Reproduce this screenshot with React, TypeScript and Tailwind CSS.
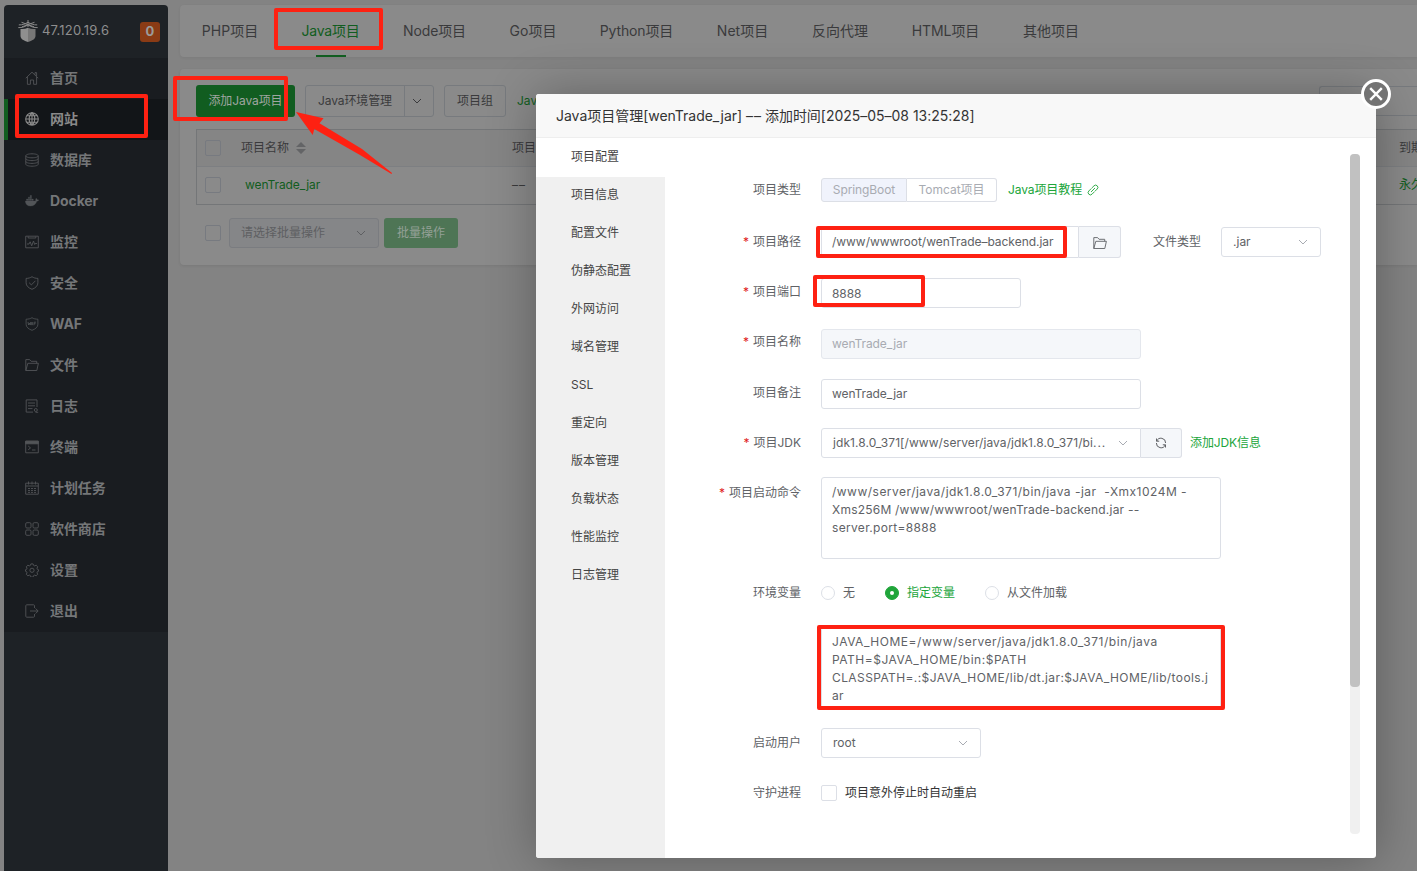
import React from 'react';

type IconProps = { children: React.ReactNode; className?: string };

const Glyph = ({ children, className = 'size-[14px]' }: IconProps) => (
  <svg viewBox="0 0 14 14" fill="none" stroke="currentColor" strokeWidth="0.9" className={`shrink-0 ${className}`}>
    {children}
  </svg>
);

const icons: Record<string, React.ReactNode> = {
  home: <path d="M.8 7.2 7 1.2l6.2 6M2.4 6v7.3h3V9h3.2v4.3h3V6M10 3.8V1.6h1.6v3.6" />,
  globe: (
    <path d="M7 .7a6.3 6.3 0 1 0 0 12.6A6.3 6.3 0 0 0 7 .7ZM.7 7h12.6M7 .7v12.6M7 .7C3.2 4 3.2 10 7 13.3M7 .7c3.8 3.3 3.8 9.3 0 12.6M1.6 3.8h10.8M1.6 10.2h10.8" strokeWidth="1.1" />
  ),
  db: (
    <path d="M.8 2.8C.8 1.6 3.6.8 7 .8s6.2.8 6.2 2S10.400 4.800 7 4.800.8 4 .8 2.800v8.400c0 1.200 2.800 2 6.200 2s6.200-.8 6.200-2V2.800M.8 5.600c0 1.200 2.800 2 6.200 2s6.200-.8 6.200-2M.8 8.400c0 1.200 2.800 2 6.200 2s6.200-.8 6.200-2" />
  ),
  docker: (
    <path
      d="M.3 7h9.9c.5-.2.7-.6.5-1.300-.1-.6.1-1.100.5-1.500.6.4.9.9.9 1.500.7-.1 1.200 0 1.600.4-.3.8-.9 1.200-1.900 1.200-1 3-3 4.700-6.400 4.700C2.400 12 .5 10.300.3 7ZM1.500 5h1.400v1.400H1.500ZM3.300 5h1.400v1.400H3.300ZM5.100 5h1.400v1.400H5.100ZM6.900 5h1.400v1.400H6.900ZM3.300 3.200h1.400v1.400H3.300ZM5.100 3.200h1.400v1.400H5.100ZM5.100 1.400h1.400v1.400H5.100Z"
      fill="currentColor"
      stroke="currentColor"
      strokeWidth="0.3"
    />
  ),
  monitor: <path d="M.7 1.200h12.600v11.600H.7ZM3.200 1.500v1.500h7.600V1.500M2 9h2l1.200-2.200 1.500 4L8.500 6l1.200 3.500L11 8l1 1" />,
  shield: <path d="M7 .7c1.600 1.100 3.600 1.700 5.900 1.700v4.400c0 3-2.400 5.200-5.900 6.500C3.500 12 1.100 9.800 1.100 6.800V2.400C3.400 2.400 5.400 1.800 7 .7ZM4.100 6.700l2.300 2.200 4-4.100" />,
  waf: <path d="M7 .7c1.600 1 3.600 1.500 5.900 1.500v5c0 3-2.400 4.800-5.900 6.100-3.500-1.300-5.900-3.100-5.900-6.100v-5C3.400 2.200 5.400 1.700 7 .7ZM3 5l.6 3 .8-2 .8 2 .5-3M6.200 8.200 7 5l.8 3.200M9 8.200V5.200h2M9 6.700h1.600" strokeWidth="0.8" />,
  folder: <path d="M.8 12.500V1.600h3.800l1.500 1.700h5.600v2M.8 12.500 2.800 5.300h10.600l-1.600 7.200H.8" />,
  log: <path d="M12 8V.9H1.200v12.200H8M3 4h7M3 6.800h7M3 9.600h4.500M9.300 11a1.500 1.500 0 1 0 3 0 1.500 1.500 0 1 0-3 0M10.500 13.300h2.700" />,
  term: (
    <>
      <path d="M.7 1.200h12.600v11.600H.7ZM3.200 6l2.300 1.900-2.300 1.900M7 10h3.500" />
      <path d="M.7 1.200h12.600v2.600H.7Z" fill="currentColor" />
    </>
  ),
  cal: <path d="M.7 2.200h12.600v11H.7ZM.7 5h12.600M3.500.5v3M7 .5v3M10.500.5v3M3 7.500h2M6 7.500h2M9 7.500h2M3 9.500h2M6 9.500h2M9 9.500h2M3 11.400h2M6 11.400h2M9 11.400h2" />,
  grid: (
    <>
      <rect x=".7" y=".7" width="5.300" height="5.300" rx="1.200" />
      <rect x="8" y=".7" width="5.300" height="5.300" rx="1.200" />
      <rect x=".7" y="8" width="5.300" height="5.300" rx="1.200" />
      <rect x="8" y="8" width="5.300" height="5.300" rx="1.200" />
    </>
  ),
  gear: (
    <>
      <path d="M5.900.9h2.200l.5 1.500 1.100.5 1.500-.7 1.500 1.600-.7 1.400.4 1.100 1.100.4v1.600l-1.100.4-.4 1.100.7 1.400-1.500 1.600-1.500-.7-1.100.5-.5 1.500H5.900l-.5-1.500-1.100-.5-1.500.7-1.500-1.600.7-1.400-.4-1.100-1.100-.4V6.700l1.100-.4.4-1.100-.7-1.400 1.500-1.600 1.500.7 1.100-.5Z" strokeLinejoin="round" />
      <circle cx="7" cy="7.300" r="2.100" />
    </>
  ),
  exit: <path d="M9.500 4V1.700c0-.5-.4-.9-.9-.9H1.700c-.5 0-.9.4-.9.9v10.600c0 .5.4.9.9.9h6.900c.5 0 .9-.4.9-.9V10M5 7h8M10.500 4.500 13.200 7l-2.700 2.500" />,
};

const menu: [string, string][] = [
  ['home', '首页'],
  ['globe', '网站'],
  ['db', '数据库'],
  ['docker', 'Docker'],
  ['monitor', '监控'],
  ['shield', '安全'],
  ['waf', 'WAF'],
  ['folder', '文件'],
  ['log', '日志'],
  ['term', '终端'],
  ['cal', '计划任务'],
  ['grid', '软件商店'],
  ['gear', '设置'],
  ['exit', '退出'],
];

const tabs: [string, string][] = [
  ['PHP项目', 'w-[100px]'],
  ['Java项目', 'w-[101px] tracking-[-0.2px]'],
  ['Node项目', 'w-[107px] tracking-[-0.15px]'],
  ['Go项目', 'w-[90px]'],
  ['Python项目', 'w-[117px] tracking-[-0.15px]'],
  ['Net项目', 'w-[95px]'],
  ['反向代理', 'w-[100px]'],
  ['HTML项目', 'w-[111px] tracking-[-0.1px]'],
  ['其他项目', 'w-[100px]'],
];

const sections = ['项目配置', '项目信息', '配置文件', '伪静态配置', '外网访问', '域名管理', 'SSL', '重定向', '版本管理', '负载状态', '性能监控', '日志管理'];

const Chevron = ({ className }: { className: string }) => (
  <svg viewBox="0 0 10 10" fill="none" stroke="currentColor" strokeWidth="1" className={`size-[10px] shrink-0 ${className}`}>
    <path d="m1 3 4 4 4-4" />
  </svg>
);

const Box = ({ className = '' }: { className?: string }) => (
  <span className={`block size-4 shrink-0 rounded-[2px] border border-[#777a80] ${className}`} />
);

const Dashes = () => (
  <span className="inline-flex gap-px">
    <span>–</span>
    <span>–</span>
  </span>
);

function Sidebar() {
  return (
    <aside className="mt-[5px] ml-1 flex w-[164px] shrink-0 flex-col rounded-t-[4px] bg-[#1e2226]">
      <div className="flex h-[53px] items-center pr-2 pb-px pl-[14px]">
        <svg viewBox="0 0 20 22" className="h-[22px] w-5">
          <path d="M2.500 9c2.500.3 5-.1 7.500-1.200V22c-4-1.200-7.500-3-7.500-6Z" fill="#8f8f8f" />
          <path d="M17.500 9c-2.500.3-5-.1-7.500-1.200V22c4-1.200 7.500-3 7.500-6Z" fill="#777" />
          <path d="M.3 7.600C4 7.800 7 6.800 10 4.800c3 2 6 3 9.700 2.800M.8 4.900c3.700.1 6.400-.8 9.200-2.700 2.800 1.900 5.500 2.800 9.200 2.700M3.500 2.300 16 6.800M16.500 2.300 4 6.800M10 0v7" fill="none" stroke="#8a8a8a" strokeWidth="1" />
        </svg>
        <span className="ml-1 text-[13px] tracking-[0.2px] text-[#8e8e8e]">47.120.19.6</span>
        <span className="mt-px ml-auto flex size-5 items-center justify-center rounded-[3px] bg-[#8a3b15] text-[13px] font-bold text-[#9b9b9b]">0</span>
      </div>
      <nav className="bg-[#191c20]">
        {menu.map(([icon, label]) => {
          const active = icon === 'globe';
          return (
            <div
              key={label}
              className={`flex h-[41px] items-center border-l-4 pb-[2px] text-[14px] font-bold ${active ? 'border-[#115d20] bg-[#121518] text-[#8a8a8a]' : 'border-transparent text-[#747678]'}`}
            >
              <span className={`ml-[17px] ${active ? 'text-[#8a8a8a]' : 'text-[#525558]'}`}>
                <Glyph>{icons[icon]}</Glyph>
              </span>
              <span className="ml-[11px] tracking-[-0.1px]">{label}</span>
            </div>
          );
        })}
      </nav>
    </aside>
  );
}

function ProjectList() {
  return (
    <main className="ml-3 flex min-w-0 flex-1 flex-col pt-[5px] text-[12px] text-[#3a3a3c]">
      <nav className="flex h-[52px] shrink-0 rounded-l-[4px] bg-[#8a8a8a] text-[14px] shadow-[0_1px_3px_rgba(0,0,0,.06)]">
        {tabs.map(([label, width], i) => (
          <div key={label} className={`relative flex items-center justify-center pb-[2px] whitespace-nowrap ${width} ${i === 1 ? 'text-[#115d20]' : ''}`}>
            {label}
            {i === 1 && <span className="absolute bottom-0 left-[36px] h-[2px] w-[30px] bg-[#115d20]" />}
          </div>
        ))}
      </nav>
      <section className="mt-3 h-[196px] rounded-l-[4px] bg-[#8a8a8a] pt-4 pl-4 shadow-[0_1px_3px_rgba(0,0,0,.08)]">
        <div className="flex h-8 items-center whitespace-nowrap">
          <div className="flex h-8 w-[99px] items-center justify-center rounded-[3px] bg-[#115d20] tracking-[-0.1px] text-[#a0a6a1]">添加Java项目</div>
          <div className="ml-[10px] flex h-8 w-[129px] rounded-[3px] border border-[#777a7e]">
            <span className="flex w-[99px] items-center justify-center border-r border-[#777a7e] tracking-[-0.1px]">Java环境管理</span>
            <span className="flex flex-1 items-center justify-center pr-1">
              <Chevron className="text-[#3a3a3c]" />
            </span>
          </div>
          <div className="ml-[10px] flex h-8 w-[62px] items-center justify-center rounded-[3px] border border-[#777a7e]">项目组</div>
          <span className="ml-[11px] text-[#115d20]">Java项目教程</span>
          <span className="ml-auto h-[30px] w-[98px] rounded-l-[3px] border border-r-0 border-[#777a7e]" />
        </div>
        <div className="mt-3 border-y border-l border-[#747678] whitespace-nowrap">
          <div className="flex h-[37px] items-center border-b border-[#7d7f82] bg-[#858585] pb-px">
            <Box className="ml-2" />
            <span className="ml-5 text-[#3a3a3c]">项目名称</span>
            <svg viewBox="0 0 10 14" className="ml-[7px] h-[14px] w-[10px] fill-[#636466]">
              <path d="M0 6 5 1l5 5ZM0 8h10l-5 5Z" />
            </svg>
            <span className="ml-[206px]">项目备注</span>
            <span className="mr-[-6px] ml-auto">到期</span>
          </div>
          <div className="flex h-[37px] items-center pb-[2px]">
            <Box className="ml-2" />
            <span className="ml-6 w-[267px] tracking-[-0.1px] text-[#115d20]">wenTrade_jar</span>
            <Dashes />
            <span className="mr-[-6px] ml-auto text-[#115d20]">永久</span>
          </div>
        </div>
        <div className="mt-[13px] flex h-[30px] items-center">
          <Box className="ml-[9px]" />
          <div className="ml-2 flex h-[30px] w-[150px] items-center justify-between rounded-[3px] border border-[#7a7c80] bg-[#858688] pr-3 pl-[11px] text-[#5e5f62]">
            请选择批量操作
            <Chevron className="" />
          </div>
          <div className="ml-[5px] flex h-[30px] w-[74px] items-center justify-center rounded-[3px] bg-[#4e7555] text-[#94a097]">批量操作</div>
        </div>
      </section>
    </main>
  );
}

type RowProps = { label?: string; required?: boolean; tall?: boolean; children: React.ReactNode };

function Row({ label, required, tall, children }: RowProps) {
  return (
    <div className={`flex ${tall ? 'h-[100px] items-start' : 'h-[50px] items-center'}`}>
      <div className={`w-[136px] shrink-0 text-right ${tall ? 'pt-4' : ''}`}>
        {required && <span className="mr-1 text-[#e02020]">*</span>}
        {label}
      </div>
      <div className={`ml-5 flex items-center ${tall ? 'pt-[9px]' : ''}`}>{children}</div>
    </div>
  );
}

const Radio = ({ label, on, className = '' }: { label: string; on?: boolean; className?: string }) => (
  <span className={`flex items-center ${className}`}>
    <span className={`flex size-[14px] items-center justify-center rounded-full border ${on ? 'border-[#20a53a] bg-[#20a53a]' : 'border-[#dcdfe6]'}`}>
      {on && <span className="size-1 rounded-full bg-white" />}
    </span>
    <span className={`ml-2 ${on ? 'text-[#20a53a]' : ''}`}>{label}</span>
  </span>
);

const TextArea = ({ lines }: { lines: [string, string][] }) => (
  <div className="h-[82px] w-[400px] rounded-[3px] border border-[#dcdfe6] px-[10px] pt-[5px] leading-[18px] whitespace-pre">
    {lines.map(([text, tracking]) => (
      <div key={text} className={tracking}>
        {text}
      </div>
    ))}
  </div>
);

function ConfigForm() {
  return (
    <div className="flex flex-1 text-[12px] whitespace-nowrap text-[#606266]">
      <form className="w-[685px] pt-[27px]">
        <Row label="项目类型">
          <span className="flex h-6 w-[86px] items-center justify-center rounded-l-[3px] border border-[#dcdfe6] bg-[#f0f3fc] tracking-[-0.1px] text-[#a8abb2]">SpringBoot</span>
          <span className="flex h-6 w-[90px] items-center justify-center rounded-r-[3px] border border-l-0 border-[#dcdfe6] text-[#a8abb2]">Tomcat项目</span>
          <span className="ml-[11px] tracking-[-0.1px] text-[#20a53a]">Java项目教程</span>
          <svg viewBox="0 0 12 12" fill="none" stroke="#20a53a" strokeWidth="0.9" strokeLinecap="round" className="ml-[5px] size-3">
            <path d="m5 3.800 2-2a2.200 2.200 0 0 1 3.200 3.200L8 7.200M7 8.200l-2 2A2.200 2.200 0 0 1 1.800 7L4 4.800M4.300 7.700l3.400-3.400" />
          </svg>
        </Row>
        <div className="h-[2px]" />
        <Row label="项目路径" required>
          <span className="flex h-8 w-[258px] items-center rounded-l-[3px] border border-[#dcdfe6] pl-[10px] tracking-[-0.03px]">/www/wwwroot/wenTrade–backend.jar</span>
          <span className="flex h-8 w-[42px] items-center justify-center rounded-r-[3px] border border-l-0 border-[#dcdfe6] bg-[#f5f7fa]">
            <Glyph className="mt-[2px] size-[14px]">{icons.folder}</Glyph>
          </span>
          <span className="ml-8">文件类型</span>
          <span className="ml-5 flex h-[30px] w-[100px] items-center justify-between rounded-[3px] border border-[#dcdfe6] pr-3 pl-[11px]">
            .jar
            <Chevron className="text-[#a8abb2]" />
          </span>
        </Row>
        <Row label="项目端口" required>
          <span className="mt-[2px] flex h-[30px] w-[200px] items-center rounded-[3px] border border-[#dcdfe6] pt-[2px] pl-[10px] tracking-[-0.1px]">8888</span>
        </Row>
        <Row label="项目名称" required>
          <span className="mt-[4px] flex h-[30px] w-[320px] items-center rounded-[3px] border border-[#e4e7ed] bg-[#f5f7fa] pl-[10px] tracking-[-0.1px] text-[#a8abb2]">wenTrade_jar</span>
        </Row>
        <div className="h-px" />
        <Row label="项目备注">
          <span className="mt-[2px] flex h-[30px] w-[320px] items-center rounded-[3px] border border-[#dcdfe6] pl-[10px] tracking-[-0.1px]">wenTrade_jar</span>
        </Row>
        <Row label="项目JDK" required>
          <span className="flex h-[30px] w-[320px] items-center justify-between rounded-l-[3px] border border-[#dcdfe6] pr-3 pl-[11px]">
            <span className="tracking-[0.07px]">
              jdk1.8.0_371[/www/server/java/jdk1.8.0_371/bi<span className="tracking-[1px]">...</span>
            </span>
            <Chevron className="text-[#a8abb2]" />
          </span>
          <span className="flex h-[30px] w-[41px] items-center justify-center rounded-r-[3px] border border-l-0 border-[#dcdfe6] bg-[#f5f7fa]">
            <svg viewBox="0 0 12 12" fill="none" stroke="currentColor" strokeWidth="1" className="size-3">
              <path d="M1.500 1.500v2.700h2.700M1.700 4.200A4.600 4.600 0 0 1 10.600 6M10.500 10.500V7.800H7.800M10.300 7.800A4.600 4.600 0 0 1 1.400 6" />
            </svg>
          </span>
          <span className="ml-2 tracking-[-0.1px] text-[#20a53a]">添加JDK信息</span>
        </Row>
        <Row label="项目启动命令" required tall>
          <TextArea
            lines={[
              ['/www/server/java/jdk1.8.0_371/bin/java -jar  -Xmx1024M -', 'tracking-[0.49px]'],
              ['Xms256M /www/wwwroot/wenTrade-backend.jar --', 'tracking-[0.22px]'],
              ['server.port=8888', 'tracking-[0.32px]'],
            ]}
          />
        </Row>
        <Row label="环境变量">
          <Radio label="无" />
          <Radio label="指定变量" on className="ml-[30px]" />
          <Radio label="从文件加载" className="ml-[30px]" />
        </Row>
        <Row tall>
          <TextArea
            lines={[
              ['JAVA_HOME=/www/server/java/jdk1.8.0_371/bin/java', 'tracking-[0.53px]'],
              ['PATH=$JAVA_HOME/bin:$PATH', 'tracking-[0.52px]'],
              ['CLASSPATH=.:$JAVA_HOME/lib/dt.jar:$JAVA_HOME/lib/tools.j', 'tracking-[0.4px]'],
              ['ar', 'tracking-[0.2px]'],
            ]}
          />
        </Row>
        <Row label="启动用户">
          <span className="flex h-[30px] w-[160px] items-center justify-between rounded-[3px] border border-[#dcdfe6] pr-3 pl-[11px]">
            root
            <Chevron className="text-[#a8abb2]" />
          </span>
        </Row>
        <Row label="守护进程">
          <span className="size-4 rounded-[2px] border border-[#dcdfe6]" />
          <span className="ml-2 text-[#333]">项目意外停止时自动重启</span>
        </Row>
      </form>
      <div className="mt-4 h-[680px] w-[10px] rounded-[4px] bg-[#f0f0f0]">
        <div className="h-[533px] rounded-[4px] bg-[#c1c1c1]" />
      </div>
    </div>
  );
}

function Modal() {
  return (
    <div className="absolute top-[94px] left-[536px] flex h-[764px] w-[840px] flex-col rounded-[3px] bg-white shadow-[1px_1px_50px_rgba(0,0,0,0.3)]">
      <header className="flex h-11 shrink-0 items-center rounded-t-[3px] border-b border-[#eee] bg-[#f8f8f8] pl-5 text-[14px] tracking-[-0.02px] whitespace-pre text-[#333]">
        {'Java项目管理[wenTrade_jar] '}
        <Dashes />
        {' 添加时间[2025–05–08 13:25:28]'}
      </header>
      <div className="flex min-h-0 flex-1">
        <nav className="w-[129px] shrink-0 rounded-bl-[3px] bg-[#f0f0f0] text-[12px] text-[#444]">
          {sections.map((s, i) => (
            <div key={s} className={`flex items-center pl-[35px] ${i === 0 ? 'h-[39px] bg-white pb-[2px]' : 'h-[38px] pb-[2px]'}`}>
              {s}
            </div>
          ))}
        </nav>
        <ConfigForm />
      </div>
      <button className="absolute top-[-15px] right-[-15px] flex size-[30px] items-center justify-center rounded-full border-[3px] border-white bg-[#737373]">
        <svg viewBox="0 0 14 14" stroke="white" strokeWidth="2.400" className="size-[14px]">
          <path d="m1.200 1.200 11.600 11.600M12.800 1.200 1.200 12.800" />
        </svg>
      </button>
    </div>
  );
}

const marks = [
  'top-[8px] left-[274px] h-[42px] w-[109px]',
  'top-[76px] left-[173px] h-[45px] w-[115px]',
  'top-[94px] left-[15px] h-[44px] w-[133px]',
  'top-[226px] left-[816px] h-[32px] w-[251px]',
  'top-[275px] left-[813px] h-[32px] w-[112px]',
  'top-[625px] left-[817px] h-[85px] w-[408px]',
];

export default function App() {
  return (
    <div className="relative flex h-[871px] w-[1417px] overflow-hidden bg-[#838383] font-[Inter,'Noto_Sans_CJK_SC',sans-serif]">
      <Sidebar />
      <ProjectList />
      <Modal />
      {marks.map((m) => (
        <div key={m} className={`pointer-events-none absolute rounded-[2px] border-4 border-[#fe2112] ${m}`} />
      ))}
      <svg viewBox="0 0 96 62" className="pointer-events-none absolute top-[112px] left-[296px] h-[62px] w-24 fill-[#fe2112]">
        <path d="M0 0 27.500 6.300 23.500 11.300 66 37 96 61 95.500 62 64 43 18.300 17 16.700 23Z" />
      </svg>
    </div>
  );
}
